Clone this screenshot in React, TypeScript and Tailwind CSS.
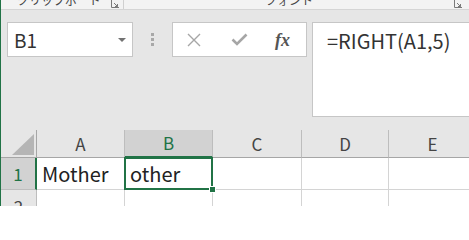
import React from 'react';

const font = { fontFamily: '"Noto Sans CJK JP", "Noto Sans", sans-serif' };

const Launcher = () => (
  <svg width="8" height="8" viewBox="0 0 8 8" className="block">
    <path d="M0.5 0v7.5H8" fill="none" stroke="#7a7a7a" strokeWidth="1" />
    <path d="M3 3l3.5 3.5M6.5 4v2.5H4" fill="none" stroke="#7a7a7a" strokeWidth="1" />
  </svg>
);

const columns = ['A', 'B', 'C', 'D', 'E'];

const App = () => {
  return (
    <div
      className="w-[469px] h-[206px] overflow-hidden bg-[#e6e6e6] border-l border-[#217346] text-[#333]"
      style={font}
    >
      {/* Ribbon group labels (cut off) */}
      <div className="h-[10px] bg-[#f3f3f3] border-b border-[#d5d5d5] flex items-end overflow-hidden text-[12px] text-[#444] leading-none">
        <div className="w-[123px] h-full flex items-end relative border-r border-[#d0d0d0]">
          <span className="ml-[16px] mb-[3px]">クリップボード</span>
          <span className="absolute left-[110px] bottom-[1px]"><Launcher /></span>
        </div>
        <div className="flex-1 h-full flex items-end relative">
          <span className="ml-[141px] mb-[3px]">フォント</span>
          <span className="absolute right-[7px] bottom-[1px]"><Launcher /></span>
        </div>
      </div>

      {/* Name box + formula bar */}
      <div className="h-[120px] flex items-start pt-[12px]">
        <div className="ml-[6px] w-[126px] h-[35px] bg-white border border-[#c6c6c6] flex items-center justify-between pl-[6px] pr-[6px]">
          <span className="text-[19px] leading-none text-[#333]">B1</span>
          <svg width="8" height="4" viewBox="0 0 8 4">
            <path d="M0 0h8L4 4z" fill="#727272" />
          </svg>
        </div>
        <div className="w-[39px] h-[35px] flex flex-col items-center justify-center gap-[2px]">
          <div className="w-[3px] h-[3px] bg-[#a8a8a8]" />
          <div className="w-[3px] h-[3px] bg-[#a8a8a8]" />
          <div className="w-[3px] h-[3px] bg-[#a8a8a8]" />
        </div>
        <div className="w-[135px] h-[35px] bg-white border border-[#c6c6c6] flex items-center">
          <svg width="14" height="14" viewBox="0 0 14 14" className="ml-[14px]">
            <path d="M1 1l12 12M13 1L1 13" stroke="#a6a6a6" strokeWidth="1.4" fill="none" />
          </svg>
          <svg width="17" height="13" viewBox="0 0 17 13" className="ml-[30px]">
            <path d="M1.5 6.5l4.5 4.5L15.5 1.5" stroke="#a6a6a6" strokeWidth="2.6" fill="none" />
          </svg>
          <span
            className="ml-[27px] text-[18px] italic font-semibold leading-none text-[#555]"
            style={{ fontFamily: '"Liberation Serif", serif' }}
          >
            fx
          </span>
        </div>
        <div className="ml-[5px] flex-1 h-[95px] bg-white border border-r-0 border-[#c6c6c6] pl-[14px] pt-[5px]">
          <span className="text-[20px] leading-[26px] text-[#333]">=RIGHT(A1,5)</span>
        </div>
      </div>

      {/* Sheet grid */}
      <div className="grid grid-cols-[36px_88px_88px_89px_87px_88px] grid-rows-[28px_32px_32px]">
        {/* corner */}
        <div className="border-r border-b border-[#a6a6a6] flex items-end justify-end pr-[2px] pb-[2px]">
          <svg width="22" height="21" viewBox="0 0 22 21">
            <path d="M22 0v21H0z" fill="#b5b5b5" />
          </svg>
        </div>
        {columns.map((c) => (
          <div
            key={c}
            className={
              c === 'B'
                ? 'bg-[#d2d2d2] border-r border-b-2 border-[#bdbdbd] border-b-[#217346] flex items-center justify-center text-[17px] text-[#217346]'
                : 'border-r border-b border-[#bdbdbd] border-b-[#a6a6a6] flex items-center justify-center text-[17px] text-[#444]'
            }
          >
            {c}
          </div>
        ))}

        {/* row 1 */}
        <div className="bg-[#d2d2d2] border-r-2 border-b border-[#bdbdbd] border-r-[#217346] flex items-center justify-center text-[17px] text-[#217346]">
          1
        </div>
        <div className="bg-white border-r border-b border-[#d4d4d4] flex items-center pl-[5px] text-[20px] text-[#222]">
          Mother
        </div>
        <div className="relative bg-white border-r border-b border-[#d4d4d4] flex items-center pl-[5px] text-[20px] text-[#222]">
          other
          <div className="absolute -left-[1px] -top-[1px] -right-[1px] -bottom-[1px] border-2 border-[#217346]" />
          <div className="absolute -right-[3px] -bottom-[3px] w-[5px] h-[5px] bg-[#217346] outline outline-1 outline-white" />
        </div>
        <div className="bg-white border-r border-b border-[#d4d4d4]" />
        <div className="bg-white border-r border-b border-[#d4d4d4]" />
        <div className="bg-white border-r border-b border-[#d4d4d4]" />

        {/* row 2 */}
        <div className="border-r border-b border-[#bdbdbd] flex items-center justify-center text-[17px] text-[#444]">
          2
        </div>
        <div className="bg-white border-r border-b border-[#d4d4d4]" />
        <div className="bg-white border-r border-b border-[#d4d4d4]" />
        <div className="bg-white border-r border-b border-[#d4d4d4]" />
        <div className="bg-white border-r border-b border-[#d4d4d4]" />
        <div className="bg-white border-r border-b border-[#d4d4d4]" />
      </div>
    </div>
  );
};

export default App;
